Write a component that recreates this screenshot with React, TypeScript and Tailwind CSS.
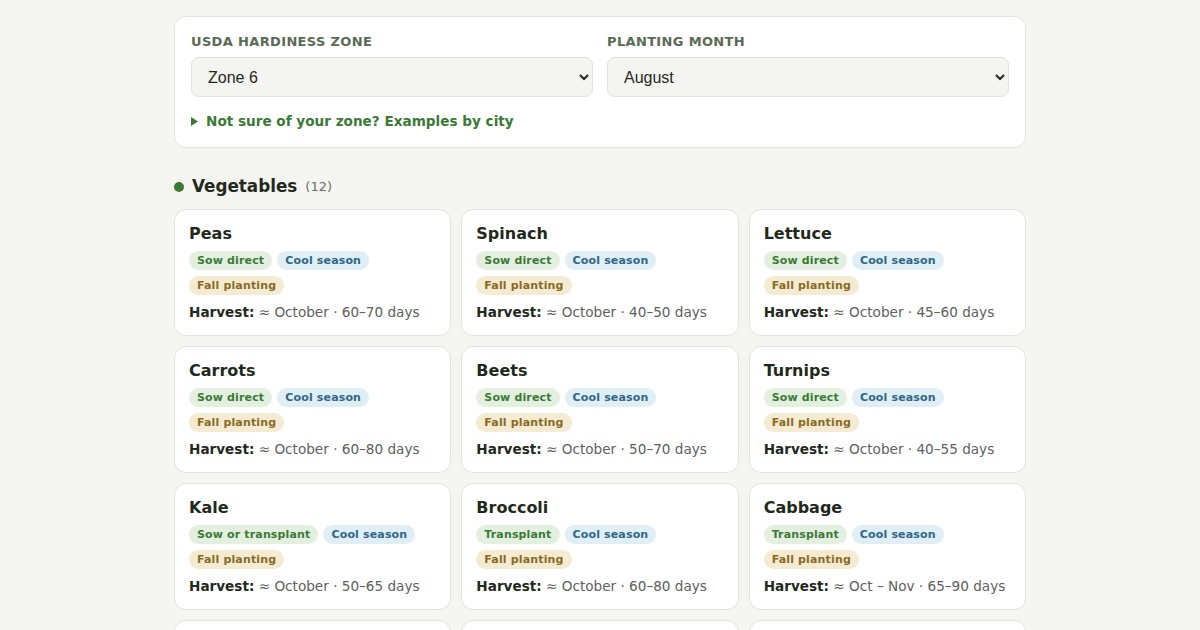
import React from "react";

type Crop = { name: string; method: string; harvest: string };

const crops: Crop[] = [
  { name: "Peas", method: "Sow direct", harvest: "≈ October · 60–70 days" },
  { name: "Spinach", method: "Sow direct", harvest: "≈ October · 40–50 days" },
  { name: "Lettuce", method: "Sow direct", harvest: "≈ October · 45–60 days" },
  { name: "Carrots", method: "Sow direct", harvest: "≈ October · 60–80 days" },
  { name: "Beets", method: "Sow direct", harvest: "≈ October · 50–70 days" },
  { name: "Turnips", method: "Sow direct", harvest: "≈ October · 40–55 days" },
  { name: "Kale", method: "Sow or transplant", harvest: "≈ October · 50–65 days" },
  { name: "Broccoli", method: "Transplant", harvest: "≈ October · 60–80 days" },
  { name: "Cabbage", method: "Transplant", harvest: "≈ Oct – Nov · 65–90 days" },
  { name: "Radishes", method: "Sow direct", harvest: "≈ September · 25–30 days" },
  { name: "Collards", method: "Transplant", harvest: "≈ October · 60–75 days" },
  { name: "Garlic", method: "Plant cloves", harvest: "≈ July · 240 days" },
];

function Card({ c }: { c: Crop }) {
  return (
    <div className="bg-white border border-[#e3e2dc] rounded-xl px-[14px] pt-[13px] pb-[13px]">
      <div className="text-[16px] font-bold text-[#1f2a1c] leading-[22px]">{c.name}</div>
      <div className="flex flex-wrap gap-x-[5px] gap-y-[6px] mt-[6px]">
        <span className="rounded-full bg-[#e3f0e0] text-[#3b7a35] text-[11px] font-bold px-2 leading-[19px] tracking-[0.15px]">{c.method}</span>
        <span className="rounded-full bg-[#e0eef5] text-[#2f6888] text-[11px] font-bold px-2 leading-[19px] tracking-[0.15px]">Cool season</span>
        <span className="rounded-full bg-[#f4ebd2] text-[#8a6a22] text-[11px] font-bold px-2 leading-[19px] tracking-[0.15px]">Fall planting</span>
      </div>
      <div className="mt-[7px] text-[13.6px] leading-[20px] text-[#5c625c] whitespace-nowrap">
        <span className="font-bold text-[#1f2a1c]">Harvest:</span> {c.harvest}
      </div>
    </div>
  );
}

export default function App() {
  return (
    <div
      className="min-h-screen bg-[#f5f5f2] pt-4"
      style={{ fontFamily: '"DejaVu Sans", sans-serif' }}
    >
      <div className="w-[852px] mx-auto">
        <div className="bg-white border border-[#e3e2dc] rounded-xl px-4 pt-4 pb-4">
          <div className="grid grid-cols-2 gap-[14px]">
            <div>
              <div className="text-[13px] leading-[17px] font-bold uppercase tracking-[0.35px] text-[#5b6a55]">USDA Hardiness Zone</div>
              <select
                defaultValue="6"
                className="mt-[7px] w-full h-10 rounded-lg border border-[#e0dfd9] bg-[#f4f4f1] pl-3 pr-2 text-[16px] text-[#1f2a1c]"
                style={{ fontFamily: '"Liberation Sans", Arial, sans-serif' }}
              >
                <option value="6">Zone 6</option>
              </select>
            </div>
            <div>
              <div className="text-[13px] leading-[17px] font-bold uppercase tracking-[0.35px] text-[#5b6a55]">Planting Month</div>
              <select
                defaultValue="aug"
                className="mt-[7px] w-full h-10 rounded-lg border border-[#e0dfd9] bg-[#f4f4f1] pl-3 pr-2 text-[16px] text-[#1f2a1c]"
                style={{ fontFamily: '"Liberation Sans", Arial, sans-serif' }}
              >
                <option value="aug">August</option>
              </select>
            </div>
          </div>
          <div className="mt-[14px] flex items-center gap-[7px] text-[13.6px] leading-5 font-bold text-[#3b7a35]">
            <svg width="8" height="9" viewBox="0 0 8 9"><polygon points="0,0 7,4.5 0,9" fill="#3b7a35" /></svg>
            <span>Not sure of your zone? Examples by city</span>
          </div>
        </div>

        <div className="mt-[25px] flex items-center h-7">
          <span className="w-[10px] h-[10px] rounded-full bg-[#3b7a35] mr-[8px]" />
          <span className="text-[16.8px] font-bold text-[#1f2a1c]">Vegetables</span>
          <span className="ml-2 text-[13px] text-[#6b6f68]">(12)</span>
        </div>

        <div className="mt-[8px] grid grid-cols-3 gap-x-[10px] gap-y-[10px]">
          {crops.map((c) => (
            <Card key={c.name} c={c} />
          ))}
        </div>
        <div className="h-8" />
      </div>
    </div>
  );
}
